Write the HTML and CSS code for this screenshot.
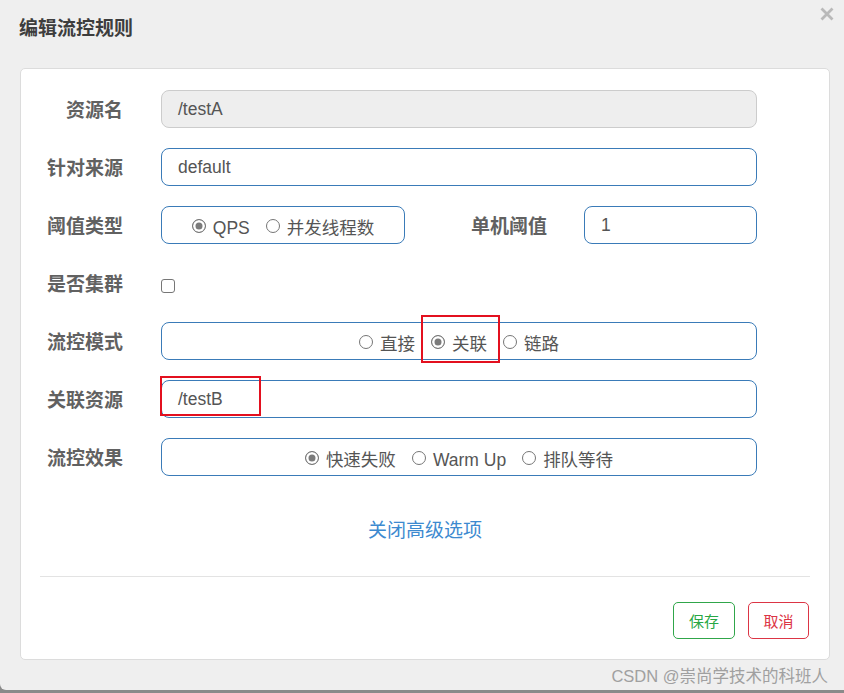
FILE: index.html
```html
<!DOCTYPE html>
<html lang="zh">
<head>
<meta charset="utf-8">
<title>编辑流控规则</title>
<link rel="stylesheet" href="styles.css">
</head>
<body>
<div class="dialog">
  <div class="header">
    <h1 class="title">编辑流控规则</h1>
    <svg class="close" width="14" height="14" viewBox="0 0 14 14"><path d="M1.5 1.5 L12.5 12.5 M12.5 1.5 L1.5 12.5" stroke="#b9b9b9" stroke-width="2.8" fill="none"/></svg>
  </div>
  <div class="card">
    <div class="form">
      <div class="row">
        <label class="label">资源名</label>
        <div class="field input disabled">/testA</div>
      </div>
      <div class="row">
        <label class="label">针对来源</label>
        <div class="field input">default</div>
      </div>
      <div class="row">
        <label class="label">阈值类型</label>
        <div class="split">
          <div class="field group narrow">
            <span class="radio"><i class="dot on"></i>QPS</span>
            <span class="radio"><i class="dot"></i>并发线程数</span>
          </div>
          <label class="label sub">单机阈值</label>
          <div class="field input grow">1</div>
        </div>
      </div>
      <div class="row">
        <label class="label">是否集群</label>
        <div class="checkrow"><i class="checkbox"></i></div>
      </div>
      <div class="row">
        <label class="label">流控模式</label>
        <div class="field group">
          <span class="radio"><i class="dot"></i>直接</span>
          <span class="radio marked"><i class="dot on"></i>关联</span>
          <span class="radio"><i class="dot"></i>链路</span>
        </div>
      </div>
      <div class="row">
        <label class="label">关联资源</label>
        <div class="field input marked-input">/testB</div>
      </div>
      <div class="row">
        <label class="label">流控效果</label>
        <div class="field group">
          <span class="radio"><i class="dot on"></i>快速失败</span>
          <span class="radio"><i class="dot"></i>Warm Up</span>
          <span class="radio"><i class="dot"></i>排队等待</span>
        </div>
      </div>
    </div>
    <div class="advanced"><a class="link">关闭高级选项</a></div>
    <hr class="divider">
    <div class="actions">
      <button class="btn save">保存</button>
      <button class="btn cancel">取消</button>
    </div>
  </div>
  <div class="watermark">CSDN @崇尚学技术的科班人</div>
</div>
</body>
</html>
```
FILE: styles.css
```css
html, body {
  margin: 0;
  padding: 0;
}
body {
  background: #8a8a8a;
  font-family: "Liberation Sans", "Noto Sans CJK SC", sans-serif;
  width: 844px;
  height: 693px;
  overflow: hidden;
}
.dialog {
  position: relative;
  height: 690px;
  background: #efefef;
  border-radius: 0 0 0 6px;
  box-sizing: border-box;
  padding: 0 14px 0 20px;
}
.header {
  height: 68px;
  display: flex;
  justify-content: space-between;
  align-items: flex-start;
  margin-left: -1px;
  margin-right: -4px;
}
.title {
  margin: 17px 0 0 0;
  font-size: 19px;
  line-height: 20px;
  font-weight: bold;
  color: #3d3d3d;
  font-family: "Noto Sans CJK SC", sans-serif;
}
.close {
  margin-top: 7px;
}
.card {
  background: #fff;
  border: 1px solid #dcdcdc;
  border-radius: 5px;
  padding: 21px 19px 20px 19px;
  height: 592px;
  box-sizing: border-box;
}
.form {
  padding-right: 53px;
  display: flex;
  flex-direction: column;
  gap: 20px;
}
.row {
  display: grid;
  grid-template-columns: 83px 1fr;
  column-gap: 38px;
  align-items: center;
  height: 38px;
}
.label {
  text-align: right;
  font-size: 19px;
  font-weight: bold;
  color: #616161;
  font-family: "Noto Sans CJK SC", sans-serif;
  white-space: nowrap;
  line-height: 20px;
}
.field {
  height: 38px;
  box-sizing: border-box;
  border: 1px solid #3a7bb8;
  border-radius: 8px;
  font-size: 17.5px;
  color: #555;
}
.input {
  display: flex;
  align-items: center;
  padding-left: 16px;
}
.disabled {
  background: #eeeeee;
  border-color: #cccccc;
}
.split {
  display: flex;
  align-items: center;
}
.narrow {
  width: 244px;
  flex: none;
}
.sub {
  width: 142px;
  margin-right: 37px;
  flex: none;
}
.grow {
  flex: 1;
}
.group {
  display: flex;
  align-items: center;
  justify-content: center;
  gap: 16px;
  padding-top: 6px;
}
.radio {
  display: inline-flex;
  align-items: center;
  line-height: 20px;
  color: #555;
  position: relative;
}
.dot {
  width: 14px;
  height: 14px;
  box-sizing: border-box;
  border: 1px solid #767676;
  border-radius: 50%;
  background: #fff;
  margin-right: 7px;
  flex: none;
  position: relative;
  top: -2px;
}
.dot.on {
  background: #7b7b7b;
  box-shadow: inset 0 0 0 2.5px #fff;
}
.marked::after {
  content: "";
  position: absolute;
  left: -10px;
  right: -13px;
  top: -19px;
  bottom: -9px;
  border: 2px solid #e3101f;
}
.marked-input {
  position: relative;
}
.marked-input::after {
  content: "";
  position: absolute;
  left: -2px;
  top: -5px;
  width: 101px;
  height: 40px;
  box-sizing: border-box;
  border: 2px solid #e3101f;
}
.checkrow {
  display: flex;
  align-items: center;
  padding-top: 6px;
}
.checkbox {
  width: 14px;
  height: 14px;
  box-sizing: border-box;
  border: 1px solid #767676;
  border-radius: 3px;
  background: #fff;
}
.advanced {
  margin-top: 40px;
  height: 26px;
  display: flex;
  align-items: center;
  justify-content: center;
}
.link {
  font-size: 19px;
  color: #3d8ad0;
  font-family: "Noto Sans CJK SC", sans-serif;
  line-height: 26px;
}
.divider {
  margin: 34px 0 0 0;
  border: 0;
  border-top: 1px solid #e3e3e3;
  height: 0;
}
.actions {
  margin-top: 25px;
  display: flex;
  justify-content: flex-end;
  gap: 13px;
  padding-right: 1px;
}
.btn {
  height: 37px;
  background: #fff;
  border-radius: 5px;
  font-size: 15px;
  font-family: "Noto Sans CJK SC", sans-serif;
  padding: 0;
  cursor: pointer;
}
.save {
  width: 62px;
  border: 1px solid #30a64a;
  color: #28a745;
}
.cancel {
  width: 61px;
  border: 1px solid #dc3545;
  color: #dc3545;
}
.watermark {
  position: absolute;
  right: 16px;
  bottom: 4px;
  font-size: 16.5px;
  color: #a0a0a0;
  line-height: 20px;
}
```
